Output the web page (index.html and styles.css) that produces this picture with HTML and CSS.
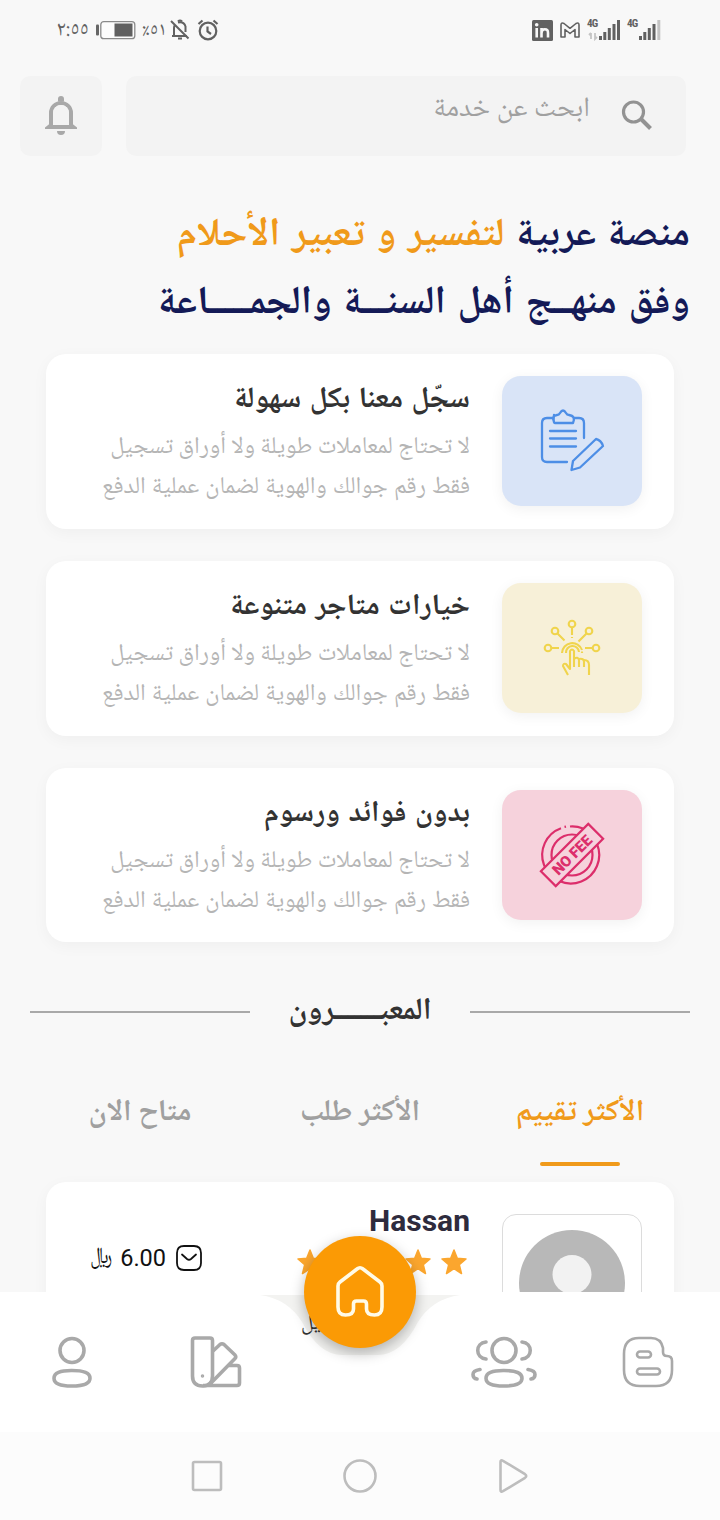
FILE: index.html
```html
<!DOCTYPE html>
<html lang="ar" dir="rtl">
<head>
    <meta charset="UTF-8">
    <meta name="viewport" content="width=device-width, initial-scale=1.0">
    <title>منصة تفسير الأحلام</title>
    <link rel="stylesheet" href="styles.css">
</head>
<body>
    <div class="phone">
        <div class="status-bar" dir="ltr">
            <div class="status-left">
                <span class="status-time" dir="rtl">٢:٥٥</span>
                <svg class="battery" width="40" height="20" viewBox="0 0 40 20">
                    <rect x="0" y="4.5" width="3" height="11" rx="1" fill="#666"/>
                    <rect x="4.8" y="1.7" width="34" height="17" rx="3" fill="#fcfcfc" stroke="#8a8a8a" stroke-width="1.3"/>
                    <rect x="18.5" y="3.5" width="18" height="13" fill="#606060"/>
                </svg>
                <span class="status-percent" dir="ltr">٪٥١</span>
                <svg class="muted" width="20" height="22" viewBox="0 0 20 22" fill="none" stroke="#616161" stroke-width="2">
                    <path d="M1 2l17.500 17.500M2 17h15M4 16V9q0-2 1-3M8 3.500q6-1.500 7.500 4V13"/>
                    <path d="M8 2.500q2-2 4 0" />
                    <path d="M8 19.500h4"/>
                </svg>
                <svg class="alarm" width="22" height="22" viewBox="0 0 22 22" fill="none" stroke="#616161" stroke-width="2.200">
                    <circle cx="11" cy="12" r="8.300"/>
                    <path d="M10.500 7.500v5l3.500 2.500M1.500 5l4-3.500M20.500 5l-4-3.500"/>
                </svg>
            </div>
            <div class="status-right">
                <svg class="linkedin" width="21" height="21" viewBox="0 0 21 21">
                    <rect width="21" height="21" rx="1.500" fill="#616161"/>
                    <g fill="none" stroke="#f7f7f7" stroke-width="2.600">
                        <path d="M4.700 8v9.500M9.500 8v9.500M9.500 13q0-3.800 3.300-3.800T16 13v4.500"/>
                    </g>
                    <circle cx="4.700" cy="4.700" r="1.800" fill="#f7f7f7"/>
                </svg>
                <svg class="gmail" width="20" height="16" viewBox="0 0 20 16" fill="none" stroke="#616161" stroke-width="1.600" stroke-linejoin="round">
                    <path d="M1 15V3q0-3 3-1.500l6 4.800 6-4.800Q19 0 19 3v12h-4V7.500l-5 4-5-4V15z"/>
                </svg>
                <div class="signal signal-data">
                    <span>4G</span>
                    <svg width="34" height="22" viewBox="0 0 34 22">
                        <path d="M4 14v6M2 16l2-2M8 14v6l2-2" fill="none" stroke="#c4c4c4" stroke-width="1.800"/>
                        <path d="M13.500 17v4M17.800 13v8M22.300 9v12M27 5v16M31.500 1v20" stroke="#616161" stroke-width="3"/>
                    </svg>
                </div>
                <div class="signal">
                    <span>4G</span>
                    <svg width="34" height="22" viewBox="0 0 34 22">
                        <path d="M13.500 17v4M17.800 13v8M22.300 9v12M27 5v16" stroke="#616161" stroke-width="3"/>
                        <path d="M31.800 1v20" stroke="#c4c4c4" stroke-width="3"/>
                    </svg>
                </div>
            </div>
        </div>

        <div class="content">
            <div class="search-row">
                <div class="search-box">
                    <svg width="32" height="32" viewBox="0 0 32 32" fill="none" stroke="#929292" stroke-width="3.200">
                        <circle cx="12.500" cy="12" r="10"/>
                        <path d="M20 19l9.500 9.500" stroke-width="4"/>
                    </svg>
                    <span>ابحث عن خدمة</span>
                </div>
                <div class="bell-box">
                    <svg width="34" height="40" viewBox="0 0 34 40">
                        <path d="M7 31V17a10 10 0 0 1 20 0v14" fill="none" stroke="#a8a8a8" stroke-width="4"/>
                        <path d="M1 33v-1.500l5-4h22l5 4V33zM14 5.500V3a3 3 0 0 1 6 0v2.500zM13 35h8a4 4 0 0 1-8 0z" fill="#a8a8a8"/>
                        <path d="M9 29V17a8 8 0 0 1 16 0v12z" fill="#f3f3f3"/>
                    </svg>
                </div>
            </div>

            <h1 class="headline">
                <span class="line">منصة عربية <em>لتفسير و تعبير الأحلام</em></span>
                <span class="line">وفق منهــج أهل السنـــة والجمـــــاعة</span>
            </h1>

            <div class="cards">
                <div class="card">
                    <div class="tile tile-blue">
                        <svg width="70" height="70" viewBox="1 -2 70 70" fill="none" stroke="#4d8ee6" stroke-width="2.300" stroke-linecap="round" stroke-linejoin="round">
                            <path d="M16 10h-5q-5 0-5 5v34q0 5 5 5h20M38 10h5q5 0 5 5v15"/>
                            <path d="M18 14q-3-6 3-7 2 0 3-2 3-5 6 0 1 2 3 2 7 1 4 8h-18q-2 0-1-8"/>
                            <path d="M14 23h26M14 30.500h26M14 38.500h26"/>
                            <path d="M35.500 62l1.500-9 23-22q5 1 7 7L44 59.500z"/>
                        </svg>
                    </div>
                    <div class="card-text">
                        <h2>سجّل معنا بكل سهولة</h2>
                        <p>لا تحتاج لمعاملات طويلة ولا أوراق تسجيل<br><span>فقط رقم جوالك والهوية لضمان عملية الدفع</span></p>
                    </div>
                </div>
                <div class="card">
                    <div class="tile tile-yellow">
                        <svg width="70" height="70" viewBox="0 0 70 70" fill="none" stroke="#f0d44c" stroke-width="2.100" stroke-linejoin="round">
                            <circle cx="35" cy="11" r="3.300"/><circle cx="18" cy="18" r="3.300"/><circle cx="52" cy="18" r="3.300"/><circle cx="11" cy="35" r="3.300"/><circle cx="59" cy="35" r="3.300"/>
                            <path d="M35 15v7M20.500 20.500l7 7M49.500 20.500l-8 8M15 35h7M55 35h-7M35 24v1M45 38.500v1.500"/>
                            <path d="M25 40a10.300 10.300 0 0 1 20-3M29 40a6.500 6.500 0 0 1 13-1"/>
                            <path d="M31 62l-5-9q0-3 3-2l4 5V38q2-3 4 0v16M37 46q4-3 5 1v7M42 46q5-1 5 3v5M47 47q5 0 5 5v10"/>
                        </svg>
                    </div>
                    <div class="card-text">
                        <h2>خيارات متاجر متنوعة</h2>
                        <p>لا تحتاج لمعاملات طويلة ولا أوراق تسجيل<br><span>فقط رقم جوالك والهوية لضمان عملية الدفع</span></p>
                    </div>
                </div>
                <div class="card">
                    <div class="tile tile-pink">
                        <svg width="70" height="70" viewBox="0 0 70 70" fill="none" stroke="#dc2e6b" stroke-width="2.200">
                            <path d="M24 8.200A28.500 28.500 0 1 0 60 24M33 6.500a28.500 28.500 0 0 1 13 2M27.500 6.900l1.500-.3"/>
                            <circle cx="35" cy="35" r="20.500"/>
                            <g transform="rotate(-45 35 35)">
                                <rect x="1.500" y="24.500" width="67" height="21" fill="#f6d2dc"/>
                                <text class="no-fee" x="35" y="40.300" text-anchor="middle" textLength="49">NO FEE</text>
                            </g>
                        </svg>
                    </div>
                    <div class="card-text">
                        <h2>بدون فوائد ورسوم</h2>
                        <p>لا تحتاج لمعاملات طويلة ولا أوراق تسجيل<br><span>فقط رقم جوالك والهوية لضمان عملية الدفع</span></p>
                    </div>
                </div>
            </div>

            <div class="section-title">
                <i></i><h3>المعبـــــــرون</h3><i></i>
            </div>

            <div class="tabs">
                <div class="tab active"><span>الأكثر تقييم</span></div>
                <div class="tab"><span>الأكثر طلب</span></div>
                <div class="tab"><span>متاح الان</span></div>
            </div>

            <div class="card profile">
                <div class="avatar">
                    <svg width="138" height="138" viewBox="0 0 138 138">
                        <circle cx="69" cy="67" r="53" fill="#b8b8b8"/>
                        <circle cx="69" cy="58.500" r="19.500" fill="#f2f2f2"/>
                    </svg>
                </div>
                <div class="profile-main">
                    <div class="profile-name">Hassan</div>
                    <div class="stars">
                        <svg viewBox="0 0 28 28"><path d="M14 2l3.300 8.300 8.700.6-6.700 5.700 2.200 8.900L14 20.700l-7.500 4.800 2.200-8.900L2 10.900l8.700-.6z"/></svg>
                        <svg viewBox="0 0 28 28"><path d="M14 2l3.300 8.300 8.700.6-6.700 5.700 2.200 8.900L14 20.700l-7.500 4.800 2.200-8.900L2 10.900l8.700-.6z"/></svg>
                        <svg viewBox="0 0 28 28"><path d="M14 2l3.300 8.300 8.700.6-6.700 5.700 2.200 8.900L14 20.700l-7.500 4.800 2.200-8.900L2 10.900l8.700-.6z"/></svg>
                        <svg viewBox="0 0 28 28"><path d="M14 2l3.300 8.300 8.700.6-6.700 5.700 2.200 8.900L14 20.700l-7.500 4.800 2.200-8.900L2 10.900l8.700-.6z"/></svg>
                        <svg viewBox="0 0 28 28"><path d="M14 2l3.300 8.300 8.700.6-6.700 5.700 2.200 8.900L14 20.700l-7.500 4.800 2.200-8.900L2 10.900l8.700-.6z"/></svg>
                    </div>
                </div>
                <div class="price">
                    <svg width="28" height="28" viewBox="0 0 28 28" fill="none" stroke="#111" stroke-width="1.800">
                        <path d="M9 2h10q7 0 7 7v10q0 7-7 7H9q-7 0-7-7V9q0-7 7-7z"/>
                        <path d="M7 10.500l5 4.500q2 1.500 4 0l5-4.500" stroke-linecap="round"/>
                    </svg>
                    <span>6.00</span>
                    <b>﷼</b>
                </div>
            </div>
        </div>

        <div class="bottom-nav">
            <svg class="notch" width="200" height="66" viewBox="0 0 200 66">
                <path d="M0 3h200q-28 4-42 27-17 33-40 33H82q-23 0-40-33Q28 7 0 3z"/>
            </svg>
            <span class="notch-text">بـالتفاصيل</span>
            <div class="home-button">
                <svg width="56" height="56" viewBox="0 0 56 56" fill="none" stroke="#fffbe8" stroke-width="3.600" stroke-linejoin="round">
                    <path d="M6 22q0-2.500 2-4L25 5q3-2.500 6 0l17 13q2 1.500 2 4v21q0 8-7.500 8-8 0-8-6v-5q0-3-3-3h-7q-3 0-3 3v5q0 6-8 6Q6 51 6 43z"/>
                </svg>
            </div>
            <div class="nav-item">
                <svg width="52" height="52" viewBox="0 0 52 52">
                    <path d="M17 2h12q10 0 12 10v4q0 4 4 4 5 0 5 5v9q0 16-16 16H18Q2 50 2 34V18Q2 2 17 2z"/>
                    <rect x="15" y="15.500" width="14" height="6" rx="3"/><rect x="15" y="32.500" width="23" height="6" rx="3"/>
                </svg>
            </div>
            <div class="nav-item">
                <svg class="thick" width="68" height="52" viewBox="0 0 68 52">
                    <circle cx="34" cy="14.500" r="12"/>
                    <path d="M34 34.500q18 0 18 7.700T34 50t-18-7.800 18-7.700zM16 6C5 7 5 22 16 23M52 6c11 1 11 16 0 17M10 33.500q-7 1-7 5t4 4.500M58 33.500q7 1 7 5t-4 4.500" stroke-linecap="round"/>
                </svg>
            </div>
            <div class="nav-item nav-gap"></div>
            <div class="nav-item">
                <svg class="thick" width="52" height="52" viewBox="0 0 52 52">
                    <path d="M5 2h15q2.500 0 2.500 2.500V40q0 10-10 10T2.500 40V4.500Q2.500 2 5 2z"/>
                    <path d="M23 15l7-6.500q2-1.500 4 0L45 19q1.500 2 0 3.500L20 48M39 29.500h8q2.500 0 2.500 2.500v15q0 2.500-2.500 2.500H13"/>
                    <circle cx="12.500" cy="40" r="1" stroke-width="1.500"/>
                </svg>
            </div>
            <div class="nav-item">
                <svg class="thick" width="52" height="52" viewBox="0 0 52 52">
                    <circle cx="26" cy="14.500" r="12"/>
                    <path d="M26 34.500q18 0 18 7.700T26 50 8 42.200t18-7.700z"/>
                </svg>
            </div>
        </div>

        <div class="system-nav">
            <svg width="34" height="36" viewBox="0 0 34 36"><path d="M4.500 4q0-2.500 2.500-1.200L29 16.200q2.500 1.800 0 3.600L7 33.200q-2.500 1.300-2.500-1.200z"/></svg>
            <svg width="34" height="36" viewBox="0 0 34 36"><circle cx="17" cy="18" r="15.500"/></svg>
            <svg width="34" height="36" viewBox="0 0 34 36"><rect x="3" y="4" width="28" height="28" rx="1.500"/></svg>
        </div>
    </div>
</body>
</html>
```
FILE: styles.css
```css
* {
    box-sizing: border-box;
}

body {
    margin: 0;
    background-color: #f8f8f8;
    font-family: "Noto Naskh Arabic", "DejaVu Sans", sans-serif;
    color: #333;
}

svg {
    display: block;
    flex: none;
}

h1, h2, h3, p {
    margin: 0;
}

.phone {
    width: 720px;
    height: 1520px;
    overflow: hidden;
    display: flex;
    flex-direction: column;
}

/* status bar */
.status-bar {
    height: 60px;
    flex: none;
    display: flex;
    justify-content: space-between;
    align-items: center;
    padding: 0 59px 0 56px;
    color: #616161;
}

.status-left,
.status-right {
    display: flex;
    align-items: center;
}

.status-time,
.status-percent {
    padding-top: 2px;
    font-size: 21px;
    line-height: 20px;
    white-space: nowrap;
}

.status-time {
    width: 33px;
}

.battery {
    margin: 0 6px 0 7px;
}

.status-percent {
    width: 24px;
    font-size: 19px;
}

.muted {
    margin-left: 4px;
}

.alarm {
    margin-left: 7px;
}

.gmail {
    margin: 0 7px 0 7px;
}

.signal {
    position: relative;
}

.signal-data {
    margin-right: 6px;
}

.signal span {
    position: absolute;
    left: 0;
    top: -1px;
    font: bold 11px/11px "Roboto Condensed", Roboto, sans-serif;
    letter-spacing: -0.8px;
}

.content {
    height: 1232px;
    flex: none;
    overflow: hidden;
    padding-top: 16px;
}

.search-row {
    display: flex;
    gap: 24px;
    height: 80px;
    padding: 0 34px 0 20px;
}

.search-box,
.bell-box {
    background-color: #f3f3f3;
    border-radius: 10px;
}

.search-box {
    flex: 1;
    display: flex;
    padding: 24px 33px 0 0;
    color: #a0a0a0;
}

.search-box span {
    margin: -7px 31px 0 0;
    font-size: 28px;
    line-height: 34px;
    word-spacing: 0.6px;
    white-space: nowrap;
}

.bell-box {
    width: 82px;
    display: flex;
    justify-content: center;
    align-items: center;
}

/* headline */
.headline {
    margin: 47px 30px 0 0;
    font-size: 39.6px;
    line-height: 68px;
    word-spacing: 3px;
    color: #141a57;
}

.headline em {
    font-style: normal;
    color: #f09a1a;
}

.line {
    display: block;
    white-space: nowrap;
}

.cards {
    display: flex;
    flex-direction: column;
    gap: 32px;
    margin-top: 15.3px;
}

.card {
    display: flex;
    height: 174.67px;
    margin: 0 46px;
    padding: 22px 32px 0 0;
    background-color: #fff;
    border-radius: 20px;
    box-shadow: 0 4px 16px rgba(0, 0, 0, 0.04);
}

.tile {
    width: 140px;
    height: 130px;
    flex: none;
    display: flex;
    justify-content: center;
    align-items: center;
    border-radius: 19px;
    box-shadow: 0 3px 14px rgba(0, 0, 0, 0.06);
}

.tile-blue {
    background-color: #d9e4f7;
}

.tile-yellow {
    background-color: #f7f0d8;
}

.tile-pink {
    background-color: #f6d2dc;
}

.no-fee {
    font: 900 15px Roboto, sans-serif;
    fill: #dc2e6b;
    stroke: none;
}

.card-text {
    margin: 3px 32px 0 0;
    white-space: nowrap;
}

.card-text h2 {
    font-size: 29.6px;
    line-height: 44px;
    word-spacing: 2px;
}

.card-text p {
    margin-top: 5px;
    font-size: 24px;
    line-height: 40px;
    color: #b5b5b5;
}

.card-text p span {
    word-spacing: 0.8px;
}

/* section title */
.section-title {
    display: flex;
    justify-content: space-between;
    align-items: center;
    height: 60px;
    margin: 39.7px 30px 0;
}

.section-title i {
    width: 220px;
    height: 2px;
    background-color: #a9a9a9;
}

.section-title h3 {
    padding-top: 2px;
    font-size: 31px;
    line-height: 60px;
    white-space: nowrap;
}

.tabs {
    display: flex;
    height: 96px;
    margin: 29px 30px 0;
}

.tab {
    flex: 1;
    display: flex;
    flex-direction: column;
    align-items: center;
    font-size: 30px;
    font-weight: bold;
    line-height: 86px;
    color: #a0a0a0;
}

.tab.active {
    color: #f09a1a;
}

.tab.active::after {
    content: "";
    width: 80px;
    height: 4px;
    margin-top: 5px;
    border-radius: 2px;
    background-color: #f09a1a;
}

/* interpreter card */
.profile {
    height: 240px;
    margin-top: 15px;
    padding-top: 32px;
}

.avatar {
    width: 140px;
    height: 140px;
    flex: none;
    border: 1px solid #dcdcdc;
    border-radius: 14px;
    padding-top: 1px;
}

.profile-main {
    width: 190px;
    margin: -11px 32px 0 0;
}

.profile-name {
    font: bold 30px/36px Roboto, sans-serif;
    color: #2e2b3d;
}

.stars {
    display: flex;
    gap: 8px;
    margin: 9px 2px 0 0;
}

.stars svg {
    width: 28px;
    height: 28px;
    fill: #fba62e;
    stroke: #fba62e;
    stroke-width: 1.5;
    stroke-linejoin: round;
}

.price {
    display: flex;
    align-items: center;
    height: 30px;
    margin: 29px 77px 0 0;
    color: #111;
}

.price span {
    margin: 0 9px 0 8px;
    font: 23.5px Roboto, sans-serif;
}

.price b {
    font-size: 23px;
    font-weight: normal;
    transform: scaleX(0.78);
    transform-origin: right center;
}

/* bottom navigation */
.bottom-nav {
    position: relative;
    height: 140px;
    flex: none;
    display: flex;
    background-color: #fff;
}

.notch {
    position: absolute;
    left: 260px;
    top: 0;
    fill: #f3f3f1;
}

.notch-text {
    position: absolute;
    left: 301px;
    top: 19px;
    font-size: 21px;
    line-height: 28px;
    color: #333;
}

.home-button {
    position: absolute;
    left: 304px;
    top: -56px;
    width: 112px;
    height: 112px;
    display: flex;
    justify-content: center;
    align-items: center;
    border-radius: 50%;
    background-color: #fb9a05;
    box-shadow: 0 5px 14px rgba(0, 0, 0, 0.28);
}

.nav-item {
    flex: 1;
    display: flex;
    justify-content: center;
    align-items: center;
}

.nav-item svg {
    fill: none;
    stroke: #a9a9a9;
    stroke-width: 2.6;
    stroke-linejoin: round;
}

.nav-item svg.thick {
    stroke-width: 3.6;
}

.system-nav {
    height: 88px;
    flex: none;
    display: flex;
    justify-content: center;
    align-items: center;
    gap: 119px;
    background-color: #fcfcfc;
}

.system-nav svg {
    fill: none;
    stroke: #bdbdbd;
    stroke-width: 2.6;
}
```
